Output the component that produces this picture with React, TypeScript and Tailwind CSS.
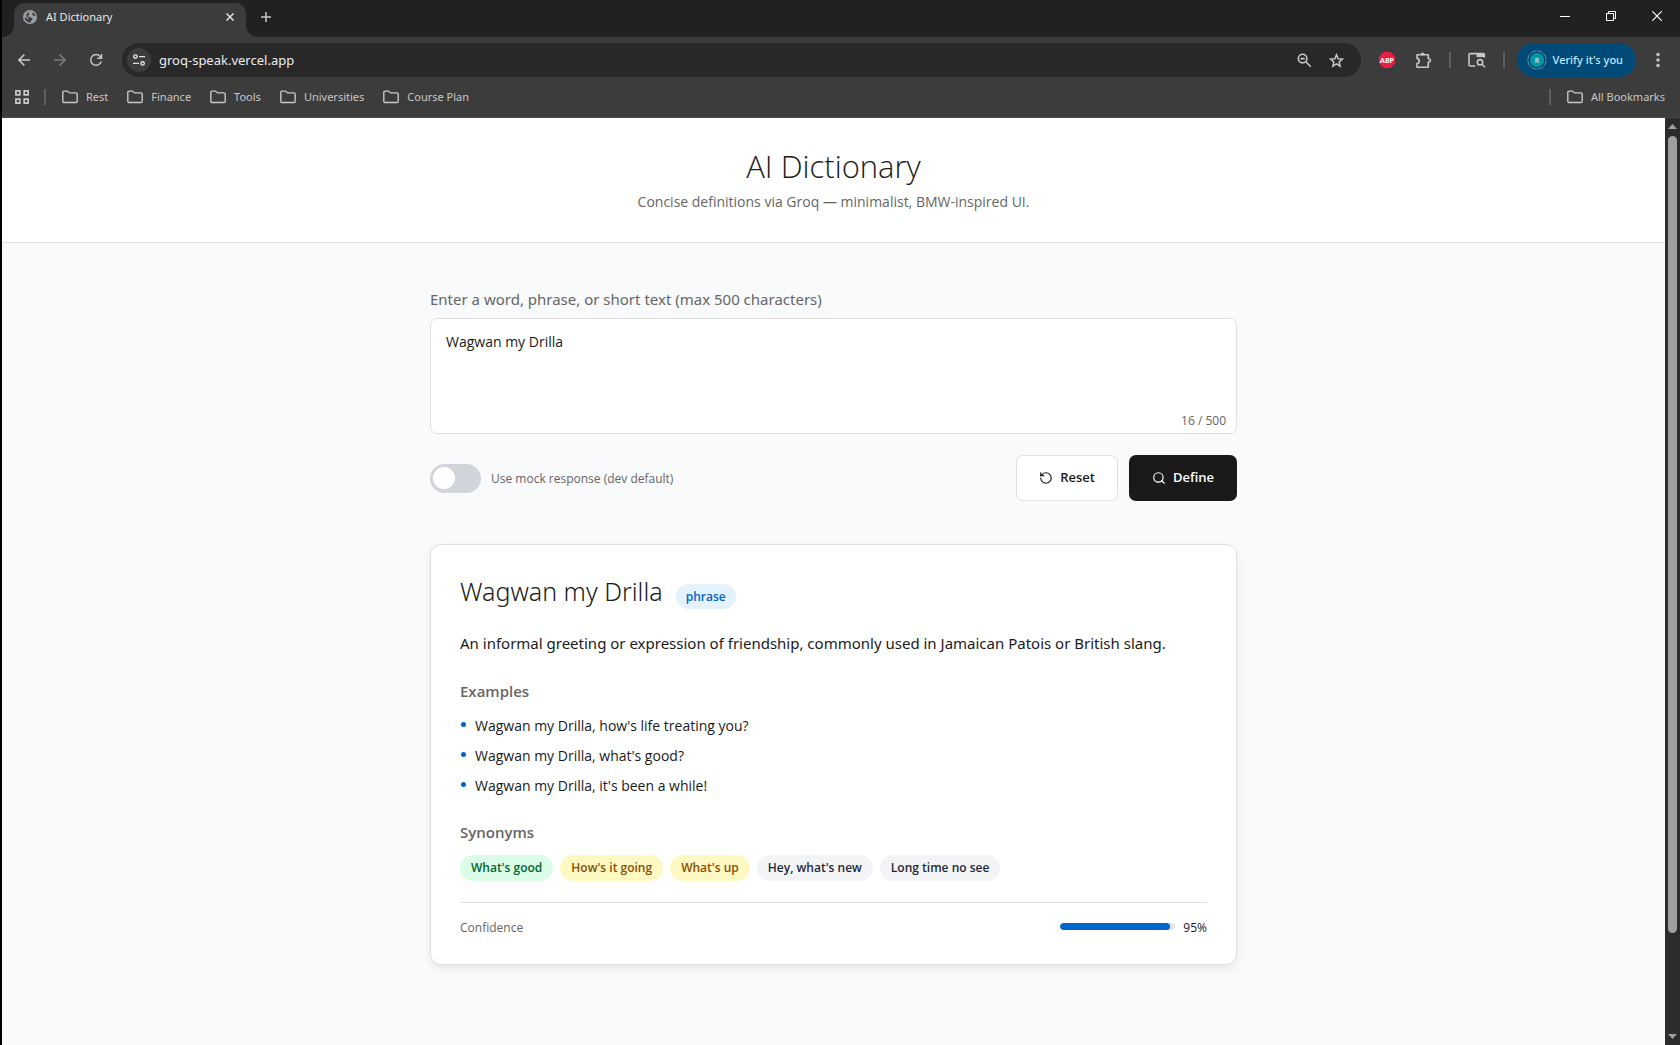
import { useState, type ReactNode } from "react";
import { RotateCcw, Search } from "lucide-react";

const BOOKMARKS = ["Rest", "Finance", "Tools", "Universities", "Course Plan"];

const EXAMPLES = [
  "Wagwan my Drilla, how's life treating you?",
  "Wagwan my Drilla, what's good?",
  "Wagwan my Drilla, it's been a while!",
];

const SYNONYMS = [
  { text: "What's good", tone: "bg-green-100 text-green-800" },
  { text: "How's it going", tone: "bg-[#fef9c3] text-yellow-800" },
  { text: "What's up", tone: "bg-[#fef9c3] text-yellow-800" },
  { text: "Hey, what's new", tone: "bg-gray-100 text-gray-800" },
  { text: "Long time no see", tone: "bg-gray-100 text-gray-800" },
];

function FolderIcon() {
  return (
    <svg width="16" height="14" viewBox="0 0 16 14" fill="none" stroke="#c7c7c7" strokeWidth="1.4" aria-hidden="true">
      <path d="M.8 2.3c0-.7.5-1.2 1.2-1.2h3.6l1.8 1.8H14c.7 0 1.2.5 1.2 1.2v7.2c0 .7-.5 1.2-1.2 1.2H2c-.7 0-1.2-.5-1.2-1.2z" />
    </svg>
  );
}

function IconButton({ label, className = "", children }: { label: string; className?: string; children: ReactNode }) {
  return (
    <button type="button" aria-label={label} className={`flex h-8 shrink-0 items-center justify-center ${className}`}>
      {children}
    </button>
  );
}

function TabStrip() {
  return (
    <div className="flex h-[37px] bg-[#1f2221]">
      <div className="flex w-3 shrink-0 bg-[#3c3c3c]">
        <div className="w-full rounded-br-xl bg-[#1f2221]" />
      </div>
      <div className="mt-[3px] flex w-[232px] shrink-0 items-center rounded-t-[10px] bg-[#3c3c3c] pr-2 pl-[9px]">
        <svg width="14" height="14" viewBox="0 0 14 14" aria-hidden="true" className="-mt-1.5">
          <circle cx="7" cy="7" r="7" fill="#9aa0a6" />
          <path
            d="M7.800 1.500C6.500 1.700 5.500 2.500 5.600 3.400c0 .7 1.300.6 1.100 1.400-.2.600-1.500.300-2 .9-.3.500.1 1 .8 1 1.200 0 2.100.2 2.400 1.100.6.200 1.500.2 1.600 1 .1.800-.9 1-1.200 1.700-.2.600 0 1.300-.7 1.900-3.200.3-5.700-1.900-6.100-4.800l2 .3c.9.200.8 1.100 1.600 1.300.7.100.9-.6.400-1.100-.6-.6-2.200-.8-2.300-2 0-.8.400-1.300.300-2C4.600 2.300 6.100 1.400 7.800 1.500z"
            fill="#3c3c3c"
          />
          <path d="M9.800 2.300c1.300.7 2.300 2 2.600 3.600-.9.400-1.600.1-2.100-.4-.4-.4-1.300-.3-1.500-1 0-.9 1.200-1.100 1-2.200z" fill="#3c3c3c" />
        </svg>
        <span className="-mt-1.5 ml-[9px] flex-1 text-[11px] text-[#e8e8e8]">AI Dictionary</span>
        <IconButton label="Close tab" className="-mt-1.5 w-4">
          <svg width="8" height="8" viewBox="0 0 8 8" stroke="#e3e3e3" strokeWidth="1.500" aria-hidden="true">
            <path d="M.5.5l7 7M7.500.5l-7 7" />
          </svg>
        </IconButton>
      </div>
      <div className="flex w-3 shrink-0 bg-[#3c3c3c]">
        <div className="w-full rounded-bl-xl bg-[#1f2221]" />
      </div>
      <IconButton label="New tab" className="mt-px w-4">
        <svg width="10" height="10" viewBox="0 0 10 10" stroke="#c7c7c7" strokeWidth="1.500" aria-hidden="true">
          <path d="M5 0v10M0 5h10" />
        </svg>
      </IconButton>
      <div className="ml-auto flex">
        <IconButton label="Minimize" className="w-[46px]">
          <svg width="10" height="10" viewBox="0 0 10 10" stroke="#fff" aria-hidden="true">
            <path d="M0 5.500h10" />
          </svg>
        </IconButton>
        <IconButton label="Restore" className="w-[46px]">
          <svg width="10" height="10" viewBox="0 0 10 10" fill="none" stroke="#fff" aria-hidden="true">
            <path d="M.5 2.500h7v7h-7zM2.500 2.500v-2h7v7h-2" />
          </svg>
        </IconButton>
        <IconButton label="Close" className="w-[46px]">
          <svg width="10" height="10" viewBox="0 0 10 10" stroke="#fff" strokeWidth="1.200" aria-hidden="true">
            <path d="M.3.3l9.400 9.400M9.700.3L.3 9.700" />
          </svg>
        </IconButton>
      </div>
    </div>
  );
}

function Toolbar() {
  return (
    <div className="flex h-[46px] items-center bg-[#3c3c3c] pr-1.5 pl-1">
      <IconButton label="Back" className="w-9">
        <svg width="12" height="12" viewBox="0 0 12 12" fill="none" stroke="#c7c7c7" strokeWidth="1.500" aria-hidden="true">
          <path d="M6.300.6L.9 6l5.400 5.400M1 6h11" />
        </svg>
      </IconButton>
      <IconButton label="Forward" className="w-9">
        <svg width="12" height="12" viewBox="0 0 12 12" fill="none" stroke="#7b7b7b" strokeWidth="1.500" aria-hidden="true">
          <path d="M5.700.6L11.100 6l-5.400 5.400M11 6H0" />
        </svg>
      </IconButton>
      <IconButton label="Reload" className="w-9">
        <svg width="14" height="14" viewBox="0 0 14 14" fill="none" stroke="#c7c7c7" strokeWidth="1.500" aria-hidden="true">
          <path d="M12.300 8.400A5.400 5.400 0 1 1 11.400 3.600L12.400 4.900M12.500 1v4.200H8.300" />
        </svg>
      </IconButton>
      <div className="ml-2 flex h-[34px] flex-1 items-center rounded-full bg-[#282828] pr-3 pl-[5px]">
        <button
          type="button"
          aria-label="View site information"
          className="flex size-6 shrink-0 items-center justify-center rounded-full bg-[#3c3c3c]"
        >
          <svg width="12" height="12" viewBox="0 0 12 12" fill="none" stroke="#e3e3e3" strokeWidth="1.400" aria-hidden="true">
            <circle cx="2.400" cy="2.600" r="1.700" />
            <path d="M6 2.600h6M0 9.400h6" />
            <circle cx="9.600" cy="9.400" r="1.700" />
          </svg>
        </button>
        <input
          type="text"
          aria-label="Address"
          defaultValue="groq-speak.vercel.app"
          className="ml-2 min-w-0 flex-1 bg-transparent pt-0.5 text-[13px] text-[#ececec] outline-none"
        />
        <IconButton label="Zoom" className="w-8">
          <svg width="15" height="15" viewBox="0 0 15 15" fill="none" stroke="#c7c7c7" strokeWidth="1.600" aria-hidden="true">
            <circle cx="5.600" cy="5.600" r="4.300" />
            <path d="M8.800 8.800l5 5M3.500 5.600h4.200" />
          </svg>
        </IconButton>
        <IconButton label="Bookmark this tab" className="-mr-1 w-8">
          <svg width="15" height="15" viewBox="0 0 15 15" fill="none" stroke="#c7c7c7" strokeWidth="1.500" aria-hidden="true">
            <path d="M7.500 1.800l1.600 3.900 4.300.4-3.200 2.800.9 4.200-3.600-2.200-3.600 2.200.9-4.200L1.600 6.100l4.300-.4z" />
          </svg>
        </IconButton>
      </div>
      <IconButton label="Adblock Plus" className="ml-[18px] w-4">
        <svg width="16" height="16" viewBox="0 0 16 16" aria-hidden="true">
          <path d="M4.700 0h6.600L16 4.700v6.600L11.300 16H4.700L0 11.300V4.700z" fill="#ed1e45" />
          <text x="8" y="10.600" textAnchor="middle" fontSize="7" fontWeight="700" fill="#fff">
            ABP
          </text>
        </svg>
      </IconButton>
      <IconButton label="Extensions" className="ml-5 w-[18px]">
        <svg width="17" height="17" viewBox="0 0 17 17" fill="none" stroke="#c7c7c7" strokeWidth="1.600" aria-hidden="true">
          <path d="M2 2.700h11.300v4.100h.5a1.500 1.500 0 0 1 0 3.200h-.5v5.200H2v-3.600c2.900-.2 2.900-5 0-5.200z" strokeLinejoin="round" />
          <path d="M5.900 2.700a1.700 1.700 0 0 1 3.400 0z" fill="#c7c7c7" strokeWidth="1" />
        </svg>
      </IconButton>
      <div className="ml-4 h-4 w-0.5 bg-[#5f5f5f]" />
      <IconButton label="Search this page with Lens" className="ml-[17px] w-[18px]">
        <svg width="18" height="16" viewBox="0 0 18 16" fill="none" stroke="#c7c7c7" strokeWidth="1.600" aria-hidden="true">
          <path d="M7.300 14H2.200c-.7 0-1.200-.5-1.200-1.200V2.800c0-.7.5-1.200 1.200-1.200h13c.7 0 1.200.5 1.200 1.200v2.700" />
          <path d="M8.500 1.600h7.800v3.500H8.500z" fill="#c7c7c7" stroke="none" />
          <circle cx="12" cy="10.300" r="2.700" />
          <path d="M14 12.300l3 3" />
        </svg>
      </IconButton>
      <div className="ml-[17px] h-4 w-0.5 bg-[#5f5f5f]" />
      <button
        type="button"
        className="ml-3 flex h-[34px] shrink-0 items-center gap-1.5 rounded-full bg-[#004a77] pr-[13px] pl-2.5 text-[11px] font-medium text-[#c2e7ff]"
      >
        <svg width="20" height="20" viewBox="0 0 20 20" aria-hidden="true">
          <circle cx="10" cy="10" r="9.200" fill="none" stroke="#6a91a8" strokeWidth="1" strokeDasharray="6 1.200" />
          <circle cx="10" cy="10" r="7" fill="#0097a7" />
          <text x="10" y="12.600" textAnchor="middle" fontSize="7" fill="#d5f3f5">
            R
          </text>
        </svg>
        Verify it's you
      </button>
      <IconButton label="Menu" className="ml-1.5 w-8">
        <svg width="4" height="16" viewBox="0 0 4 16" fill="#c7c7c7" aria-hidden="true">
          <circle cx="2" cy="2.500" r="1.700" />
          <circle cx="2" cy="8" r="1.700" />
          <circle cx="2" cy="13.500" r="1.700" />
        </svg>
      </IconButton>
    </div>
  );
}

function BookmarksBar() {
  return (
    <nav
      aria-label="Bookmarks"
      className="flex h-[35px] items-center border-b border-[#4a4749] bg-[#3c3c3c] pr-[15px] pb-[6px] pl-[13px] text-[11px] text-[#c7c7c7]"
    >
      <IconButton label="Apps" className="w-3.5">
        <svg width="14" height="14" viewBox="0 0 14 14" fill="none" stroke="#c7c7c7" strokeWidth="1.700" aria-hidden="true">
          <path d="M.9.9h3.900v3.900H.9zM9.200.9h3.900v3.900H9.200zM.9 9.200h3.900v3.900H.9zM9.200 9.200h3.900v3.900H9.200z" />
        </svg>
      </IconButton>
      <div className="mr-4 ml-[15px] h-4 w-0.5 bg-[#5f5f5f]" />
      <div className="flex gap-[19px]">
        {BOOKMARKS.map((name) => (
          <button key={name} type="button" className="flex items-center gap-2">
            <FolderIcon />
            {name}
          </button>
        ))}
      </div>
      <div className="mr-4 ml-auto h-4 w-0.5 bg-[#5f5f5f]" />
      <button type="button" className="flex items-center gap-2">
        <FolderIcon />
        All Bookmarks
      </button>
    </nav>
  );
}

function ScrollTrack() {
  return (
    <div aria-hidden="true" className="flex w-[15px] shrink-0 flex-col items-center bg-[#2c2c2c] py-1.5">
      <svg width="9" height="5" viewBox="0 0 9 5" fill="#9f9f9f">
        <path d="M4.500 0L9 5H0z" />
      </svg>
      <div className="mt-[7px] w-[9px] grow-[798] rounded-full bg-[#9f9f9f]" />
      <div className="grow-[101]" />
      <svg width="9" height="5" viewBox="0 0 9 5" fill="#9f9f9f">
        <path d="M0 0h9L4.500 5z" />
      </svg>
    </div>
  );
}

function EntryForm() {
  const [text, setText] = useState("Wagwan my Drilla");
  const [mock, setMock] = useState(false);
  return (
    <form onSubmit={(e) => e.preventDefault()}>
      <label htmlFor="entry" className="block font-['Noto_Sans',sans-serif] text-[15px] leading-[22px] text-[#666]">
        Enter a word, phrase, or short text (max 500 characters)
      </label>
      <div className="relative mt-2">
        <textarea
          id="entry"
          maxLength={500}
          value={text}
          onChange={(e) => setText(e.target.value)}
          className="block h-[116px] w-full resize-none rounded-[7px] border border-[#e0e0e0] bg-white px-[15px] py-[11px] text-sm leading-6 text-[#1a1a1a] outline-none"
        />
        <span className="absolute right-[11px] bottom-[5px] text-xs leading-4 text-[#666]">{text.length} / 500</span>
      </div>
      <div className="mt-[21px] flex items-center justify-between">
        <label className="flex items-center gap-2.5 text-xs text-[#666]">
          <input
            type="checkbox"
            role="switch"
            checked={mock}
            onChange={(e) => setMock(e.target.checked)}
            className="peer sr-only"
          />
          <span className="flex h-[29px] w-[51px] items-center rounded-full bg-[#d1d5db] px-[3px] peer-checked:justify-end peer-checked:bg-[#0066cc]">
            <span className="size-[22px] rounded-full bg-white" />
          </span>
          <span className="pt-0.5">Use mock response (dev default)</span>
        </label>
        <div className="flex gap-[11px]">
          <button
            type="button"
            onClick={() => setText("")}
            className="flex h-[46px] items-center gap-[7px] rounded-[7px] border border-[#e0e0e0] bg-white px-[22px] text-[13px] font-semibold text-[#1a1a1a]"
          >
            <RotateCcw size={14} strokeWidth={2} />
            Reset
          </button>
          <button
            type="submit"
            className="flex h-[46px] items-center gap-[7px] rounded-[7px] bg-[#1a1a1a] px-[23px] text-[13px] font-semibold text-white"
          >
            <Search size={14} strokeWidth={2} />
            Define
          </button>
        </div>
      </div>
    </form>
  );
}

function ResultCard() {
  const confidence = 95;
  return (
    <article className="mt-[43px] rounded-[11px] border border-[#e0e0e0] bg-white px-[29px] pt-7 pb-[27px] text-[#1a1a1a] shadow-[0_4px_8px_rgba(0,0,0,0.08)]">
      <div className="flex items-end gap-[13px]">
        <h2 className="font-['Noto_Sans',sans-serif] text-[25px] leading-9 font-light">Wagwan my Drilla</h2>
        <span className="rounded-full bg-[#e3f2fd] px-2.5 text-xs leading-[25px] font-semibold text-[#0066cc]">
          phrase
        </span>
      </div>
      <p className="mt-[21px] font-['Noto_Sans',sans-serif] text-[15px] leading-[26px]">
        An informal greeting or expression of friendship, commonly used in Jamaican Patois or British slang.
      </p>
      <h3 className="mt-6 text-[15px] leading-[22px] font-semibold text-[#666]">Examples</h3>
      <ul className="mt-[13px] flex flex-col gap-2 text-sm leading-[22px]">
        {EXAMPLES.map((line) => (
          <li key={line} className="flex items-start gap-[9px] pl-px">
            <span aria-hidden="true" className="mt-[7px] size-[5px] rounded-full bg-[#0066cc]" />
            {line}
          </li>
        ))}
      </ul>
      <h3 className="mt-6 text-[15px] leading-[22px] font-semibold text-[#666]">Synonyms</h3>
      <ul className="mt-3 flex flex-wrap gap-[7px] text-xs leading-[26px] font-semibold">
        {SYNONYMS.map(({ text, tone }) => (
          <li key={text} className={`rounded-full px-[11px] ${tone}`}>
            {text}
          </li>
        ))}
      </ul>
      <div className="mt-[21px] flex items-center justify-between border-t border-[#e0e0e0] pt-4 text-xs leading-[18px]">
        <span className="text-[#666]">Confidence</span>
        <div className="flex items-center gap-2">
          <div className="mb-1 h-[7px] w-[115px] overflow-hidden rounded-full bg-gray-200">
            <div className="h-full rounded-full bg-[#0066cc]" style={{ width: `${confidence}%` }} />
          </div>
          <span className="font-medium">{confidence}%</span>
        </div>
      </div>
    </article>
  );
}

export default function App() {
  return (
    <div className="flex min-h-screen flex-col border-l-2 border-black bg-[#f9fafc] font-['Noto_Sans',sans-serif]">
      <TabStrip />
      <Toolbar />
      <BookmarksBar />
      <div className="flex flex-1 font-['Open_Sans','Noto_Sans',sans-serif]">
        <div className="min-w-0 flex-1 bg-[#f9fafc]">
          <header className="border-b border-[#e0e0e0] bg-white px-6 pt-7 pb-[30px] text-center">
            <h1 className="text-[31px] leading-10 font-light text-[#1a1a1a]">AI Dictionary</h1>
            <p className="mt-1.5 text-sm leading-5 text-[#666]">
              Concise definitions via Groq — minimalist, BMW-inspired UI.
            </p>
          </header>
          <main className="mx-auto max-w-[807px] pt-[45px] pb-12">
            <EntryForm />
            <ResultCard />
          </main>
        </div>
        <ScrollTrack />
      </div>
    </div>
  );
}
